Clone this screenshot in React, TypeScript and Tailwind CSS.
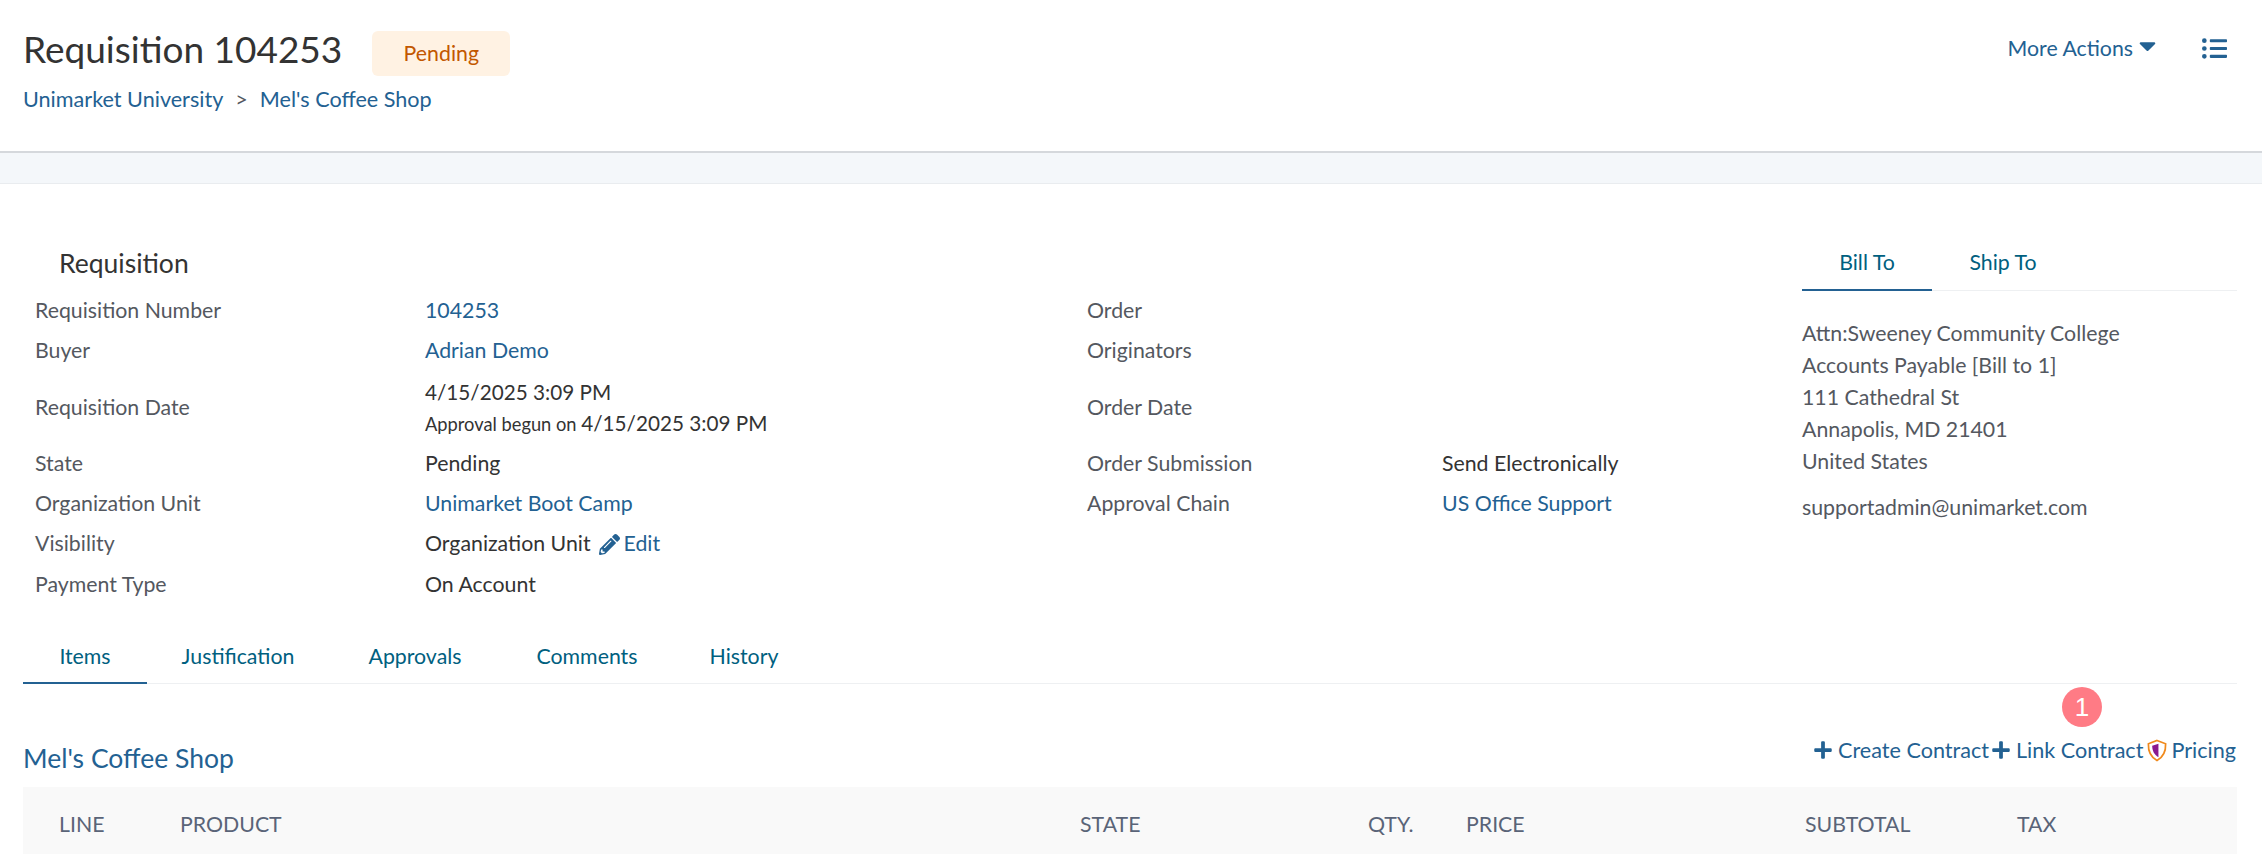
import { FaCaretDown, FaListUl, FaPencilAlt, FaPlus } from "react-icons/fa";

const link = "text-[#236192]";

function Row({ label, children, className = "h-[40px]" }: { label: string; children?: React.ReactNode; className?: string }) {
  return (
    <div className={`flex items-center ${className}`}>
      <div className="w-[425px] shrink-0 pl-[35px] text-[#54585f]">{label}</div>
      <div className="text-[#333]">{children}</div>
    </div>
  );
}

function Row2({ label, children, className = "h-[40px]" }: { label: string; children?: React.ReactNode; className?: string }) {
  return (
    <div className={`flex items-center ${className}`}>
      <div className="w-[355px] shrink-0 text-[#54585f]">{label}</div>
      <div className="text-[#333]">{children}</div>
    </div>
  );
}

function Shield() {
  return (
    <svg width="20" height="23" viewBox="1 0 20 24" className="mx-[4px]">
      <path d="M11 1.500 20 5c.3 8-2.500 14-9 17.500C4.500 19 1.700 13 2 5z" fill="#fff" stroke="#f08a1d" strokeWidth="1.800" />
      <path d="M12.500 5v14C8 16.500 6 12 6 7z" fill="#8a1a8e" />
    </svg>
  );
}

export default function App() {
  return (
    <div className="h-[854px] overflow-hidden bg-white font-['Lato','Noto_Sans',sans-serif] text-[21.3px]">
      <header className="flex h-[153px] justify-between border-b-2 border-[#d5d8dc] pl-[23px] pr-[35px]">
        <div>
          <div className="mt-[31px] flex h-[45px] items-start">
            <h1 className="-mt-[3px] text-[37px] leading-[42px] text-[#333]">Requisition 104253</h1>
            <span className="ml-[30px] flex h-[45px] w-[138px] items-center justify-center rounded-md bg-[#fff2e3] text-[#c25700]">Pending</span>
          </div>
          <div className="mt-[7px] flex items-center text-[21.6px]">
            <a className={link}>Unimarket University</a>
            <span className="mx-[12px] text-[#54585f]">&gt;</span>
            <a className={link}>Mel's Coffee Shop</a>
          </div>
        </div>
        <div className="mt-[33px] flex items-start">
          <a className={`flex items-center ${link}`}>More Actions<FaCaretDown className="ml-[1px] -mt-[6px] text-[27px]" /></a>
          <FaListUl className={`ml-[41px] mt-[3px] text-[25px] ${link}`} />
        </div>
      </header>
      <div className="h-[31px] border-b border-[#e9ecef] bg-[#f4f7fa]" />

      <div className="flex pt-[59px] pr-[25px]">
        <div className="w-[1802px] shrink-0 pt-[6px]">
          <h2 className="pl-[59px] text-[26.5px] leading-[28px] text-[#333]">Requisition</h2>
          <div className="mt-[14px] flex">
            <div className="w-[1087px] shrink-0">
              <Row label="Requisition Number"><a className={link}>104253</a></Row>
              <Row label="Buyer"><a className={link}>Adrian Demo</a></Row>
              <Row label="Requisition Date" className="h-[73px] pt-[1px]">
                <div className="text-[20.7px] leading-[31px]">4/15/2025 3:09 PM</div>
                <div className="text-[20.7px] leading-[31px]"><span className="text-[18.3px]">Approval begun on </span>4/15/2025 3:09 PM</div>
              </Row>
              <Row label="State">Pending</Row>
              <Row label="Organization Unit"><a className={link}>Unimarket Boot Camp</a></Row>
              <Row label="Visibility">
                <span className="flex items-center">Organization Unit<a className={`ml-[8px] flex items-center ${link}`}><FaPencilAlt className="mr-[4px] text-[21px]" />Edit</a></span>
              </Row>
              <Row label="Payment Type" className="h-[41px]">On Account</Row>
            </div>
            <div>
              <Row2 label="Order" />
              <Row2 label="Originators" />
              <Row2 label="Order Date" className="h-[73px] pt-[1px]" />
              <Row2 label="Order Submission">Send Electronically</Row2>
              <Row2 label="Approval Chain"><a className={link}>US Office Support</a></Row2>
            </div>
          </div>
        </div>
        <div className="flex-1">
          <div className="flex h-[48px] border-b border-[#eef0f2] text-[#00607f]">
            <div className="-mb-px w-[130px] border-b-2 border-[#236192] pt-[4px] text-center">Bill To</div>
            <div className="w-[142px] pt-[4px] text-center">Ship To</div>
          </div>
          <div className="mt-[26px] leading-[32px] text-[#54585f]">
            <div>Attn:Sweeney Community College</div>
            <div>Accounts Payable [Bill to 1]</div>
            <div>111 Cathedral St</div>
            <div>Annapolis, MD 21401</div>
            <div>United States</div>
          </div>
          <div className="mt-[15px] text-[#54585f]">supportadmin@unimarket.com</div>
        </div>
      </div>

      <div className="ml-[23px] mr-[25px] mt-[26px] flex h-[53px] border-b border-[#eef0f2] text-[#00607f]">
        <div className="-mb-px w-[124px] border-b-2 border-[#236192] pt-[10px] text-center">Items</div>
        <div className="w-[182px] pt-[10px] text-center">Justification</div>
        <div className="w-[172px] pt-[10px] text-center">Approvals</div>
        <div className="w-[172px] pt-[10px] text-center">Comments</div>
        <div className="w-[142px] pt-[10px] text-center">History</div>
      </div>

      <div className="relative ml-[23px] mr-[25px] mt-[59px] flex h-[44px] justify-between">
        <h3 className={`text-[26.5px] leading-[30px] ${link}`}>Mel's Coffee Shop</h3>
        <div className={`-mt-[8px] mr-[1px] flex h-[30px] items-center text-[21.6px] ${link}`}>
          <FaPlus className="mr-[5px] text-[20px]" />Create Contract
          <FaPlus className="ml-[2px] mr-[5px] text-[20px]" />Link Contract
          <Shield />Pricing
          <span className="absolute right-[135px] -top-[56px] flex size-[40px] items-center justify-center rounded-full bg-[#ff7b85] font-['Liberation_Sans',sans-serif] text-[26px] text-white">1</span>
        </div>
      </div>
      <div className="ml-[23px] mr-[25px] flex h-[76px] items-center bg-[#f9f9f9] text-[#5a6478]">
        <div className="w-[157px] pl-[36px]">LINE</div>
        <div className="w-[900px]">PRODUCT</div>
        <div className="w-[288px]">STATE</div>
        <div className="w-[98px]">QTY.</div>
        <div className="w-[339px]">PRICE</div>
        <div className="w-[212px]">SUBTOTAL</div>
        <div>TAX</div>
      </div>
    </div>
  );
}
